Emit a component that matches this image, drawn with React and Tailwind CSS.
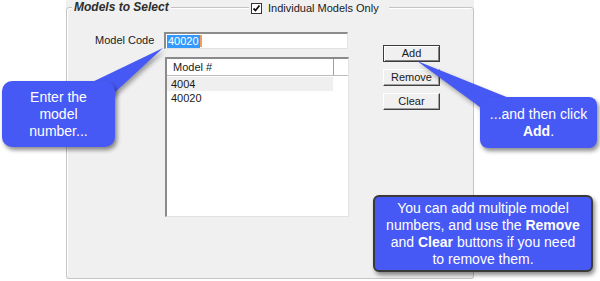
import React from "react";

const Bubble = ({ className, children }) => (
  <div
    className={
      "absolute flex items-center justify-center text-center text-white text-[14px] leading-[17px] bg-[#4759f5] shadow-[2px_3px_4px_rgba(0,0,0,0.45)] " +
      className
    }
  >
    <div>{children}</div>
  </div>
);

const WinButton = ({ label, isDefault }) => (
  <button
    className={
      isDefault
        ? "w-[57px] h-[17px] text-[11px] leading-none bg-[#f0f0f0] border border-[#3c3c3c] shadow-[inset_1px_1px_0_#fff,inset_-1px_-1px_0_#808080]"
        : "w-[57px] h-[17px] text-[11px] leading-none bg-[#f0f0f0] border border-t-white border-l-white border-r-[#404040] border-b-[#404040] shadow-[inset_-1px_-1px_0_#a0a0a0]"
    }
  >
    {label}
  </button>
);

export default function App() {
  return (
    <div className="relative w-[600px] h-[281px] bg-white overflow-hidden font-['Liberation_Sans',Arial,sans-serif] text-[#1a1a1a]">
      <div className="ml-[66px] w-[408px] h-[279px] bg-[#f0f0f0] pt-[7px]">
        <div className="relative h-[272px] border border-[#c4c4c4] rounded-[3px] shadow-[inset_1px_1px_0_#fff]">
          {/* group title */}
          <span className="absolute -top-[8px] left-[5px] px-[2px] bg-[#f0f0f0] text-[12px] leading-[14px] font-bold italic text-[#2d2d2d]">
            Models to Select
          </span>
          {/* checkbox */}
          <label className="absolute -top-[6px] left-[182px] pl-[2px] pr-[10px] bg-[#f0f0f0] flex items-center gap-[6px] text-[11px] leading-[13px]">
            <span className="w-[11px] h-[11px] border border-[#333] bg-white flex items-center justify-center">
              <svg width="9" height="9" viewBox="0 0 9 9">
                <path d="M1.5 4.5 L3.5 6.5 L7.5 1.5" stroke="#111" strokeWidth="1.8" fill="none" />
              </svg>
            </span>
            Individual Models Only
          </label>

          <div className="flex pt-[24px] pl-[28px]">
            <div className="w-[69px] h-[17px] flex items-center text-[11px]">Model Code</div>
            <div className="flex flex-col w-[185px]">
              <div className="w-[184px] h-[17px] bg-white border-t-2 border-l-2 border-[#8c8c8c] border-r border-b border-r-[#e3e3e3] border-b-[#e3e3e3] flex items-center pl-[1px]">
                <span className="bg-[#3399ff] text-white text-[11px] leading-[13px] px-[1px]">40020</span>
                <span className="w-[2px] h-[12px] bg-[#f0a050]"></span>
              </div>
              <div className="ml-[1px] mt-[8px] w-[184px] h-[160px] bg-white border-t-2 border-l-2 border-[#8a8a8a] border-r border-b border-r-[#e3e3e3] border-b-[#e3e3e3]">
                <div className="flex h-[17px] border-b border-[#bdbdbd] text-[11px]">
                  <div className="w-[166px] pl-[6px] flex items-center">Model #</div>
                  <div className="w-[2px] border-l border-r border-l-[#a0a0a0] border-r-white"></div>
                  <div className="flex-1"></div>
                </div>
                <div className="mt-[1px] w-[166px] h-[14px] bg-[#efefef] pl-[4px] text-[11px] leading-[14px]">4004</div>
                <div className="w-[166px] h-[14px] pl-[4px] text-[11px] leading-[14px]">40020</div>
              </div>
            </div>
            <div className="ml-[34px] mt-[13px] flex flex-col gap-[7px]">
              <WinButton label="Add" isDefault />
              <WinButton label="Remove" />
              <WinButton label="Clear" />
            </div>
          </div>
        </div>
      </div>

      {/* pointers */}
      <svg
        className="absolute left-0 top-0 drop-shadow-[2px_3px_2px_rgba(0,0,0,0.35)]"
        width="600"
        height="281"
        viewBox="0 0 600 281"
      >
        <polygon points="163,48 86,85 112,95" fill="#4759f5" />
        <polygon points="417,61 484,110 514,100" fill="#4759f5" />
      </svg>

      <Bubble className="left-[2px] top-[81px] w-[113px] h-[66px] rounded-[10px]">
        Enter the
        <br />
        model
        <br />
        number...
      </Bubble>

      <Bubble className="left-[480px] top-[97px] w-[117px] h-[51px] rounded-[8px]">
        ...and then click
        <br />
        <b>Add</b>.
      </Bubble>

      <Bubble className="left-[373px] top-[195px] w-[220px] h-[77px] rounded-[6px] border-2 border-[#3a3a3a] leading-[16.5px]">
        You can add multiple model
        <br />
        numbers, and use the <b>Remove</b>
        <br />
        and <b>Clear</b> buttons if you need
        <br />
        to remove them.
      </Bubble>
    </div>
  );
}
